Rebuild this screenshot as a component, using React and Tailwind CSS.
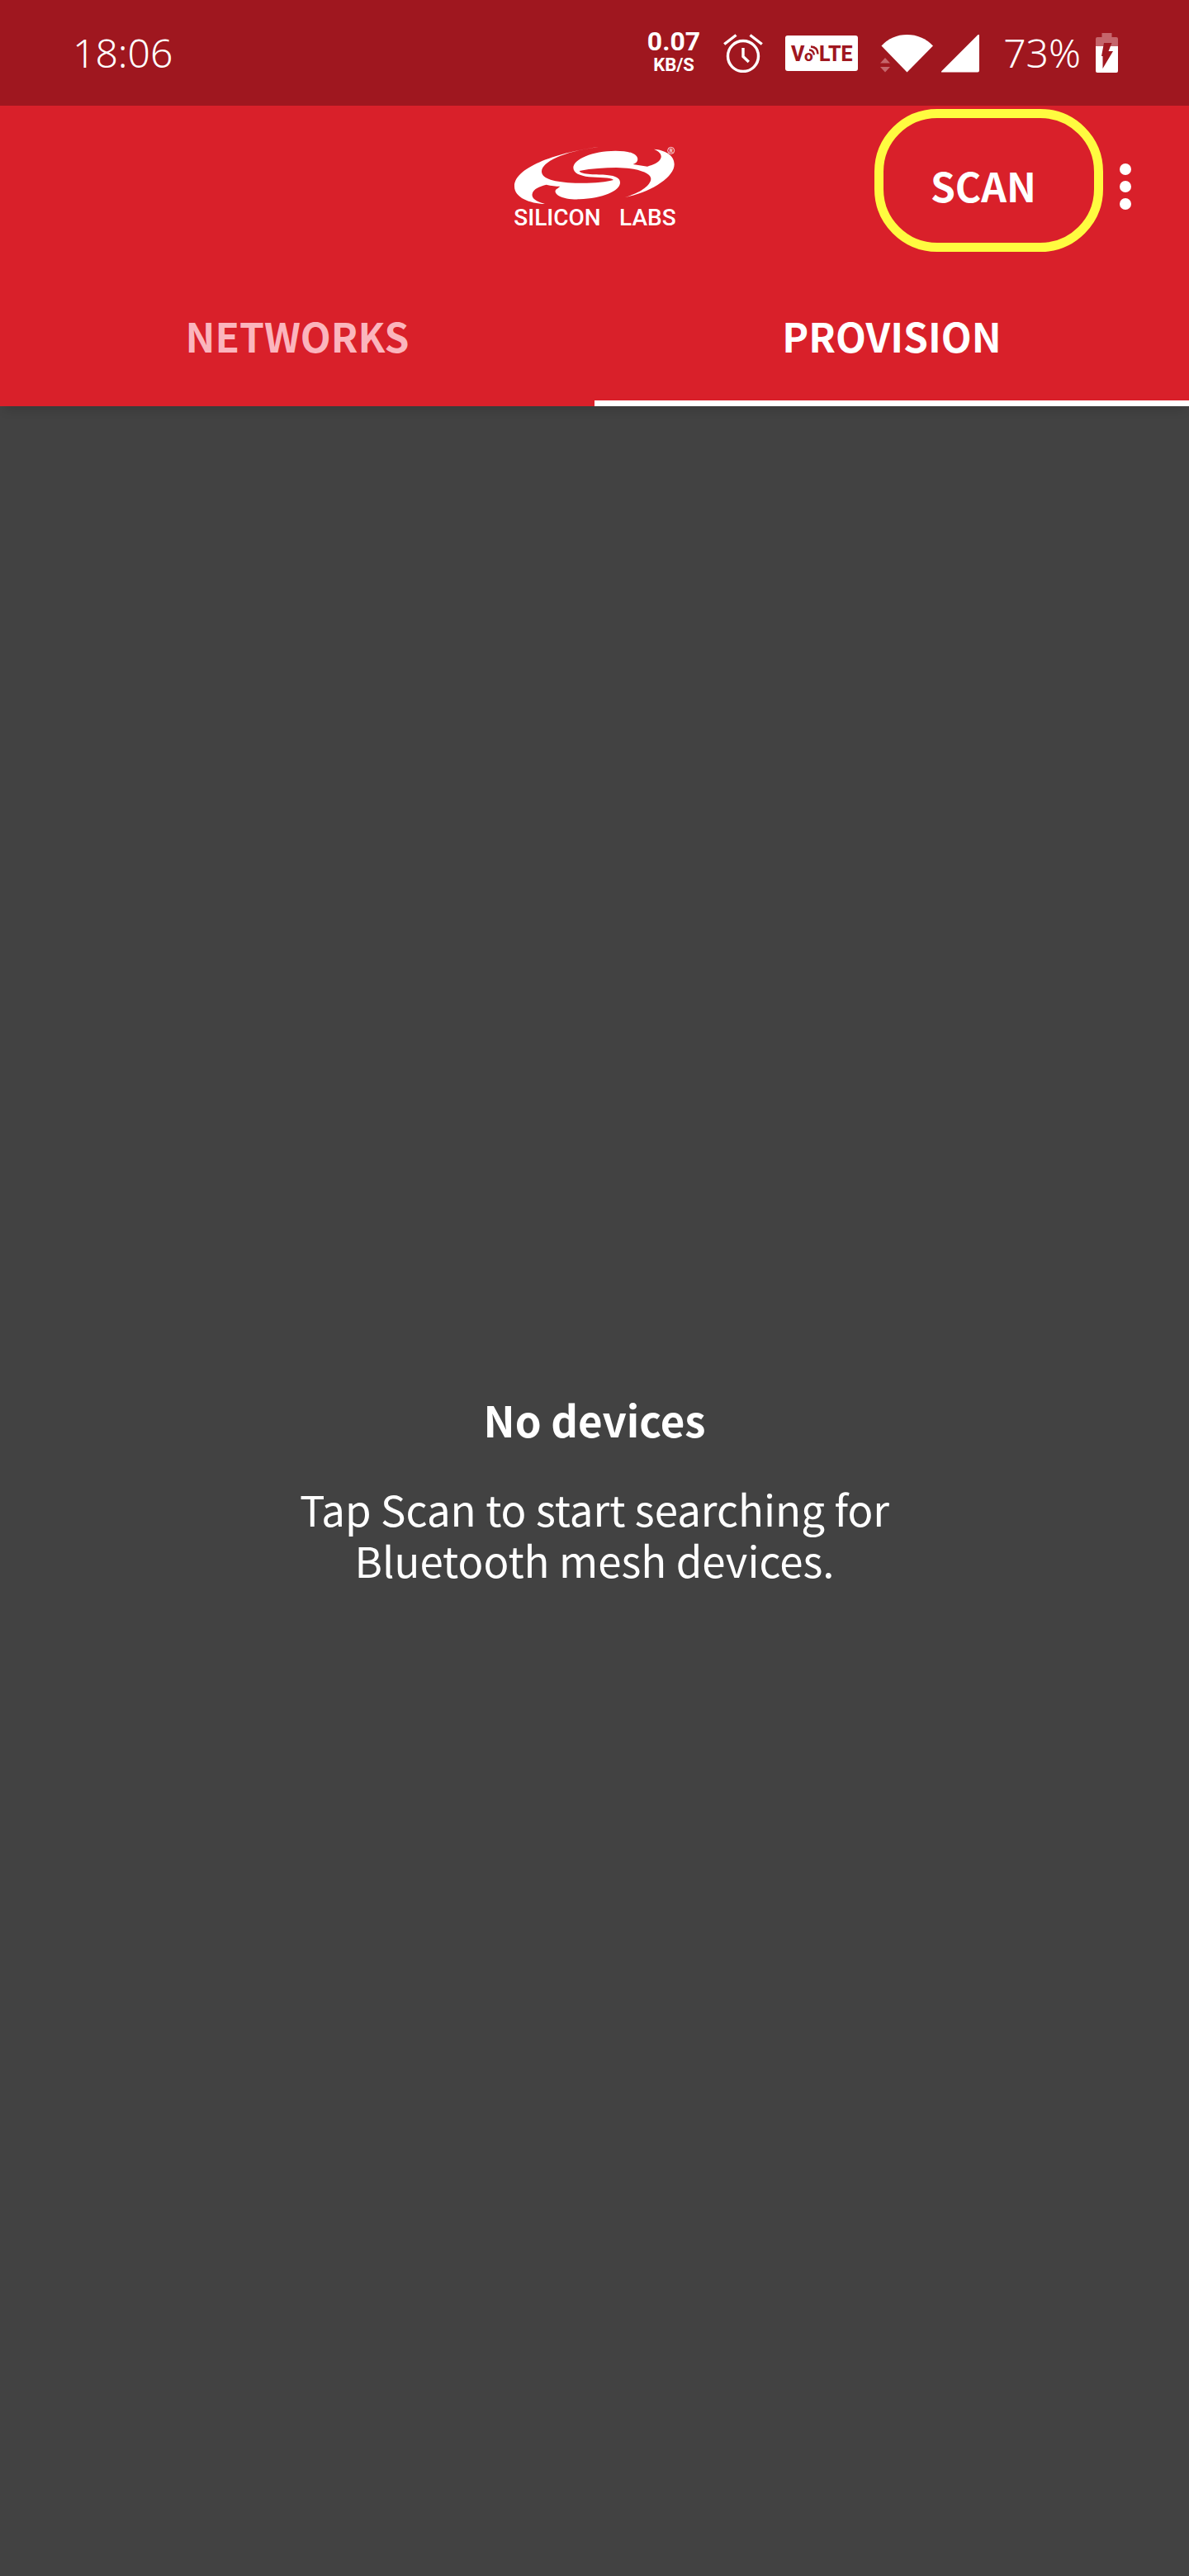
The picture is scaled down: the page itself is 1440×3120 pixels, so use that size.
function StatusBar() {
  return (
    <div className="flex h-32 items-center justify-between bg-[#9f171f] pl-[88px] pr-[86px] font-['Noto_Sans',sans-serif]">
      <time className="text-[48px] font-light leading-none">18:06</time>
      <div className="flex items-center">
        <div className="flex flex-col items-center pb-1 font-['Roboto',sans-serif] font-bold">
          <span className="text-[32px] leading-[34px]">0.07</span>
          <span className="text-[22px] leading-[24px]">KB/S</span>
        </div>
        <svg className="ml-7 h-12 w-12" viewBox="0 0 48 48" fill="none" stroke="currentColor" strokeWidth="3.4" role="img" aria-label="Alarm">
          <circle cx="24" cy="28" r="18.500" />
          <path d="M24 18v10.500l6.800 6.500M1.200 13.500 15.500 2.500M46.800 13.500 32.500 2.500" />
        </svg>
        <svg className="ml-[26px] h-11 w-[90px]" viewBox="0 0 90 44" role="img" aria-label="VoLTE">
          <rect x="1" y="1" width="88" height="43" rx="3" fill="#fff" />
          <g fill="#9f171f" fontFamily="Roboto, sans-serif" fontWeight="800">
            <text x="8" y="32" fontSize="25">V</text>
            <text x="24" y="32" fontSize="19">o</text>
            <text x="42" y="32" fontSize="25">LTE</text>
          </g>
          <path d="M30 18.500q5 0 6 6M32 14.500q8.500 .5 8.500 9" fill="none" stroke="#9f171f" strokeWidth="2.400" />
        </svg>
        <svg className="ml-[26px] h-12 w-[65px]" viewBox="0 0 65 48" role="img" aria-label="Wi-Fi">
          <path d="M1.500 15.500Q14 2 32.500 2T64 15.500L32.500 47.500Z" fill="#fff" />
          <path d="M0 36.500 6 30 12 36.500ZM0 41H12L6 47.500Z" fill="#c5666c" />
        </svg>
        <svg className="ml-2 h-12 w-12" viewBox="0 0 48 48" fill="currentColor" role="img" aria-label="Mobile signal">
          <path d="M2 47.500Q0 47.500 1.500 46L45 2.500Q47 .5 47 3.500V45.500Q47 47.500 45 47.500Z" />
        </svg>
        <span className="ml-7 text-[48px] font-light leading-none">73%</span>
        <svg className="ml-[18px] h-12 w-[27px]" viewBox="0 0 27 48" role="img" aria-label="Battery charging">
          <path d="M0 16V7Q0 5 2 5H7.500V0H19.500V5H25Q27 5 27 7V16Z" fill="#c5666c" />
          <path d="M0 16H27V46Q27 48 25 48H2Q0 48 0 46Z" fill="#fff" />
          <path d="M10 12H19.500L15.500 22H21L8.500 43V28H7Z" fill="#9f171f" />
        </svg>
      </div>
    </div>
  );
}

function Logo() {
  return (
    <svg className="h-[114px] w-[196px]" viewBox="66 28 588 342" role="img" aria-label="Silicon Labs" fill="#fff">
      <path d="M375 55C240 72 69 125 69 198C69 239 125 260 180 262C141 252 131 238 134 225C138 206 162 198 185 192C204 196 218 198 235 198L226 206C213 211 216 224 228 231C248 243 278 246 305 245C388 243 453 215 453 185C453 168 438 160 405 157C370 153 312 158 305 142C350 133 395 130 440 130C505 131 563 146 565 170C566 196 520 225 470 238C565 220 650 165 650 118C650 84 615 66 576 63C600 73 606 86 600 98C593 112 574 120 552 126L500 118C514 113 519 104 516 95C511 77 480 69 436 69C352 70 283 99 283 131C284 150 306 160 340 164C376 167 418 165 429 175C402 183 345 188 290 186C215 183 168 170 168 144C169 110 243 72 375 55Z" />
      <g fontFamily="Roboto, sans-serif" fontSize="84" fontWeight="500">
        <text x="67" y="341">SILICON</text>
        <text x="450" y="341">LABS</text>
      </g>
      <circle cx="638" cy="68" r="12" fill="none" stroke="#fff" strokeWidth="2.500" />
      <text x="632" y="75" fontSize="19" fontFamily="Roboto, sans-serif" fontWeight="500">R</text>
    </svg>
  );
}

const tabClass = "border-y-[7px] border-transparent pb-1";

export default function App() {
  return (
    <div className="flex min-h-screen flex-col bg-[#424242] font-['Noto_Sans_CJK_SC','Noto_Sans',sans-serif] text-white">
      <StatusBar />
      <header className="bg-[#d9202a] shadow-[0_10px_12px_-6px_rgba(0,0,0,0.15)]">
        <div className="grid h-[196px] grid-cols-3 items-center">
          <div />
          <div className="flex justify-center">
            <Logo />
          </div>
          <div className="flex items-center justify-end pr-[25px]">
            <button className="relative h-36 w-60 pb-1 text-[48px] font-bold leading-none">
              SCAN
              <span className="absolute -bottom-[7px] -left-3 -right-[25px] -top-[22px] rounded-[76px] border-[11px] border-[#fffb40]" />
            </button>
            <button aria-label="More options" className="flex h-36 w-[104px] flex-col items-center justify-center gap-[7px]">
              <span className="size-3.5 rounded-full bg-white" />
              <span className="size-3.5 rounded-full bg-white" />
              <span className="size-3.5 rounded-full bg-white" />
            </button>
          </div>
        </div>
        <nav className="grid h-[168px] grid-cols-2 text-[48px] font-bold leading-none">
          <button className={`${tabClass} text-[#fbb5bd]`}>NETWORKS</button>
          <button className={`${tabClass} border-b-white`} aria-current="page">PROVISION</button>
        </nav>
      </header>
      <main className="flex flex-1 flex-col items-center justify-center gap-[46px] pb-1 text-center text-[51px] leading-[62px]">
        <h1 className="font-bold">No devices</h1>
        <p>
          Tap Scan to start searching for
          <br />
          Bluetooth mesh devices.
        </p>
      </main>
    </div>
  );
}
